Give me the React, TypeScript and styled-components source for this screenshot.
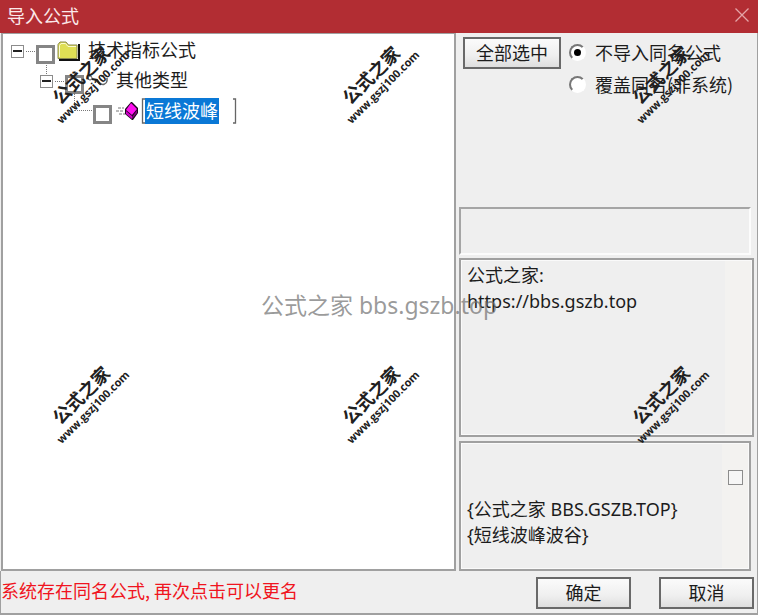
import React, { useState } from 'react';
import styled, { createGlobalStyle } from 'styled-components';

const GlobalStyle = createGlobalStyle`
  * { box-sizing: border-box; }
  body { margin: 0; background: #efefef; }
  body, button, input, textarea {
    font-family: "Noto Sans", "Noto Sans CJK SC", sans-serif;
    font-size: 18px;
    color: #1c1c1c;
  }
`;

const Dialog = styled.div`
  position: relative;
  display: flex;
  flex-direction: column;
  min-height: 100vh;
  overflow: hidden;
  background: #efefef;
  font-family: "Noto Sans CJK SC", sans-serif;
`;

const TitleBar = styled.header`
  display: flex;
  align-items: center;
  justify-content: space-between;
  height: 33px;
  padding: 0 8px 4px 7px;
  background: #b22d33;
  color: #fbe9ea;
`;

const Title = styled.h1`
  margin: 0;
  font-size: 18px;
  line-height: 26px;
  font-weight: 400;
`;

const CloseButton = styled.button`
  display: flex;
  padding: 0;
  border: 0;
  background: none;
`;

const Body = styled.main`
  flex: 1;
  display: grid;
  grid-template-columns: minmax(0, 1fr) 292px;
  column-gap: 3px;
  padding: 0 6px 0 1px;
  border-right: 1px solid #a0a0a0;
`;

const Tree = styled.ul`
  margin: 0;
  padding: 2px 0 0 8px;
  list-style: none;
  background: #fff;
  border: 2px solid #a0a0a0;
  border-top-width: 1px;
`;

const TreeRow = styled.li<{ $indent: number }>`
  display: flex;
  align-items: center;
  height: 30px;
  padding-left: ${(p) => p.$indent}px;
`;

const Expander = styled.button<{ $linked?: boolean }>`
  position: relative;
  width: 13px;
  height: 13px;
  padding: 0;
  border: 1px solid #8c8c8c;
  background: #fff;

  &::after {
    content: "";
    position: absolute;
    left: 1px;
    right: 1px;
    top: 4px;
    height: 2px;
    background: #222;
  }

  &::before {
    content: "";
    position: absolute;
    display: ${(p) => (p.$linked ? 'block' : 'none')};
    left: 5px;
    bottom: 13px;
    height: 9px;
    border-left: 1px dotted #777;
  }
`;

const Link = styled.span`
  width: 9px;
  margin: 0 1px 0 2px;
  border-top: 1px dotted #777;
`;

const Elbow = styled.span`
  width: 18px;
  height: 18px;
  margin: 0 1px 18px 0;
  border: 0 dotted #777;
  border-width: 0 0 1px 1px;
`;

const TreeCheck = styled.input`
  appearance: none;
  flex: none;
  width: 19px;
  height: 19px;
  margin: 6px 2px 0 0;
  border: 3px solid #858585;
  background: #fff;
`;

const RowLabel = styled.label<{ $gap: number }>`
  padding-left: ${(p) => p.$gap}px;
  line-height: 26px;
  padding-bottom: 4px;
`;

const NameBox = styled.span`
  display: flex;
  align-items: center;
  justify-content: space-between;
  width: 96px;
  height: 28px;
  margin-left: 2px;
`;

const NameInput = styled.input`
  width: 74px;
  height: 26px;
  padding: 0 0 2px 1px;
  border: 0;
  border-radius: 0;
  outline: 0;
  background: #0a78d6;
  color: #fff;
  font-family: "Noto Sans CJK SC", sans-serif;
`;

const NameEnd = styled.span`
  flex: 1;
`;

const Side = styled.section`
  display: flex;
  flex-direction: column;
`;

const Options = styled.div`
  flex: 1;
  display: flex;
  align-items: flex-start;
  gap: 8px;
  min-height: 174px;
  padding: 4px 0 0 4px;
`;

const PushButton = styled.button<{ $width: number }>`
  flex: none;
  width: ${(p) => p.$width}px;
  height: 32px;
  padding: 0 0 2px;
  border: 2px solid #696969;
  border-radius: 0;
  background: linear-gradient(#fbfbfb, #efefef 60%, #dedede);
  font-family: "Noto Sans CJK SC", sans-serif;
  line-height: 26px;
`;

const RadioGroup = styled.div`
  display: flex;
  flex-direction: column;
`;

const RadioLabel = styled.label`
  display: flex;
  align-items: center;
  gap: 9px;
  height: 32px;
  padding-bottom: 2px;
  white-space: nowrap;
`;

const Radio = styled.input`
  appearance: none;
  flex: none;
  display: grid;
  place-items: center;
  width: 17px;
  height: 17px;
  margin: 0;
  border: 2px solid;
  border-color: #777 #fff #fff #777;
  border-radius: 50%;
  background: #fff;

  &:checked::before {
    content: "";
    width: 7px;
    height: 7px;
    border-radius: 50%;
    background: #000;
  }
`;

const StatusFrame = styled.div`
  height: 48px;
  margin-bottom: 3px;
  border: 2px solid;
  border-color: #a5a5a5 #fcfcfc #fcfcfc #a5a5a5;
`;

const MemoFrame = styled.div<{ $height: number; $bleed?: boolean }>`
  display: flex;
  height: ${(p) => p.$height}px;
  margin-right: ${(p) => (p.$bleed ? -3 : 0)}px;
  border: 2px solid #a0a0a0;
  box-shadow: inset 0 0 0 1px #fafafa;

  & + & {
    margin-top: 4px;
  }
`;

const Memo = styled.textarea<{ $top: number }>`
  flex: 1;
  min-width: 0;
  padding: ${(p) => p.$top}px 0 0 6px;
  border: 0;
  outline: 0;
  resize: none;
  overflow: hidden;
  background: transparent;
  line-height: 26px;
`;

const Track = styled.div`
  width: 26px;
  margin: 1px;
  padding: 26px 0 0 6px;
  background: #f3f2f0;
`;

const TrackBox = styled.input`
  appearance: none;
  display: block;
  width: 15px;
  height: 15px;
  margin: 0;
  border: 1px solid #8c8c8c;
  background: #f6f6f6;
`;

const Footer = styled.footer`
  display: flex;
  align-items: flex-start;
  gap: 28px;
  height: 44px;
  padding: 6px 3px 0 0;
  border: solid #a0a0a0;
  border-width: 0 1px 2px;
`;

const Warning = styled.p`
  flex: 1;
  margin: 0;
  color: #f01420;
  line-height: 26px;
`;

const Overlay = styled.div`
  position: absolute;
  inset: 0;
  pointer-events: none;
`;

const CenterMark = styled(Overlay)`
  display: flex;
  align-items: center;
  justify-content: center;
  padding-bottom: 6px;
  font-family: "Noto Sans", "Noto Sans CJK SC", sans-serif;
  font-size: 23px;
  line-height: 32px;
  color: rgba(110, 110, 110, 0.7);
  white-space: nowrap;
`;

const StampGrid = styled(Overlay)`
  display: grid;
  grid-template-columns: repeat(3, 100px);
  grid-auto-rows: 100px;
  gap: 220px 190px;
  padding: 30px 0 0 36px;
`;

const Stamp = styled.div`
  display: flex;
  flex-direction: column;
  align-items: center;
  justify-content: center;
  transform: rotate(-45deg);
  color: #202020;
  white-space: nowrap;
`;

const StampName = styled.span`
  font-family: "Noto Sans CJK SC", sans-serif;
  font-size: 18px;
  line-height: 20px;
  font-weight: 700;
`;

const StampSite = styled.span`
  font-family: "Open Sans", sans-serif;
  font-size: 11px;
  line-height: 16px;
  font-weight: 700;
`;

const CloseIcon = () => (
  <svg width="16" height="16" viewBox="0 0 16 16" fill="none" stroke="#e4a5a8" strokeWidth="1.3">
    <path d="M1.5 1.5 14.5 14.5M14.5 1.5 1.5 14.5" />
  </svg>
);

const FolderIcon = () => (
  <svg width="23" height="20" viewBox="0 0 23 20">
    <path d="M2 19h20V4h-1" fill="none" stroke="#111" strokeWidth="2" />
    <path d="M1 17.5V3.500L3 1h6l2.500 3H20v13.500z" fill="#dfdf55" stroke="#8a8a50" />
    <path d="M2.500 16V4.500L4 2.500h4.500L11 5.500h8" fill="none" stroke="#fafad2" />
  </svg>
);

const TypeIcon = () => (
  <svg width="24" height="20" viewBox="0 0 24 20" fill="none" stroke="#555">
    <circle cx="4" cy="7" r="2" />
    <path d="M6 8l5 1 3 4" stroke="#222" strokeWidth="2" />
    <path d="M15 5h3M21 7v3a4 4 0 0 1-7 2" stroke="#666" strokeWidth="1.500" />
  </svg>
);

const FormulaIcon = () => (
  <svg width="25" height="20" viewBox="0 0 25 20">
    <path d="M4 7h6M2 10h8M5 13h6" stroke="#777" strokeDasharray="3 1" />
    <path d="M11 8 17 1h1l6 6v5l-5 7h-1l-7-6z" fill="#1b061b" />
    <path d="M12 9 17 2l6 6-5 6z" fill="#ff10f0" />
    <path d="M12 10l6 5v3l-6-5z" fill="#d000c8" />
    <path d="M18 16l5-7v3l-5 6z" fill="#850080" />
  </svg>
);

const Bracket = ({ flip }: { flip?: boolean }) => (
  <svg width="4" height="26" viewBox="0 0 4 26" fill="none" stroke="#666" strokeWidth="1.300">
    <path d={flip ? 'M0 1h2.500v24H0' : 'M4 1H1.500v24H4'} />
  </svg>
);

const CODE = '\n\n{公式之家 BBS.GSZB.TOP}\n{短线波峰波谷}';
const STAMPS = [0, 1, 2, 3, 4, 5];

export default function App() {
  const [mode, setMode] = useState('skip');
  const [name, setName] = useState('短线波峰');

  return (
    <Dialog role="dialog" aria-labelledby="title">
      <GlobalStyle />
      <TitleBar>
        <Title id="title">导入公式</Title>
        <CloseButton aria-label="关闭"><CloseIcon /></CloseButton>
      </TitleBar>
      <Body>
        <Tree>
          <TreeRow $indent={0}>
            <Expander aria-label="折叠" />
            <Link />
            <TreeCheck type="checkbox" id="indicators" />
            <FolderIcon />
            <RowLabel $gap={8} htmlFor="indicators">技术指标公式</RowLabel>
          </TreeRow>
          <TreeRow $indent={29}>
            <Expander aria-label="折叠" $linked />
            <Link />
            <TreeCheck type="checkbox" id="others" />
            <TypeIcon />
            <RowLabel $gap={6} htmlFor="others">其他类型</RowLabel>
          </TreeRow>
          <TreeRow $indent={63}>
            <Elbow />
            <TreeCheck type="checkbox" aria-label="短线波峰" />
            <FormulaIcon />
            <NameBox>
              <Bracket />
              <NameInput aria-label="公式名称" value={name} onChange={(e) => setName(e.target.value)} />
              <NameEnd />
              <Bracket flip />
            </NameBox>
          </TreeRow>
        </Tree>
        <Side>
          <Options>
            <PushButton $width={98}>全部选中</PushButton>
            <RadioGroup role="radiogroup" aria-label="同名公式">
              <RadioLabel>
                <Radio type="radio" name="mode" checked={mode === 'skip'} onChange={() => setMode('skip')} />
                不导入同名公式
              </RadioLabel>
              <RadioLabel>
                <Radio type="radio" name="mode" checked={mode === 'cover'} onChange={() => setMode('cover')} />
                覆盖同名(非系统)
              </RadioLabel>
            </RadioGroup>
          </Options>
          <StatusFrame />
          <MemoFrame $height={179} $bleed>
            <Memo $top={2} readOnly aria-label="公式说明" value={'公式之家:\nhttps://bbs.gszb.top'} />
            <Track />
          </MemoFrame>
          <MemoFrame $height={130}>
            <Memo $top={1} readOnly aria-label="公式内容" value={CODE} />
            <Track><TrackBox type="checkbox" aria-label="滚动" /></Track>
          </MemoFrame>
        </Side>
      </Body>
      <Footer>
        <Warning>系统存在同名公式, 再次点击可以更名</Warning>
        <PushButton $width={95}>确定</PushButton>
        <PushButton $width={95}>取消</PushButton>
      </Footer>
      <CenterMark>公式之家 bbs.gszb.top</CenterMark>
      <StampGrid>
        {STAMPS.map((n) => (
          <Stamp key={n}>
            <StampName>公式之家</StampName>
            <StampSite>www.gszj100.com</StampSite>
          </Stamp>
        ))}
      </StampGrid>
    </Dialog>
  );
}
